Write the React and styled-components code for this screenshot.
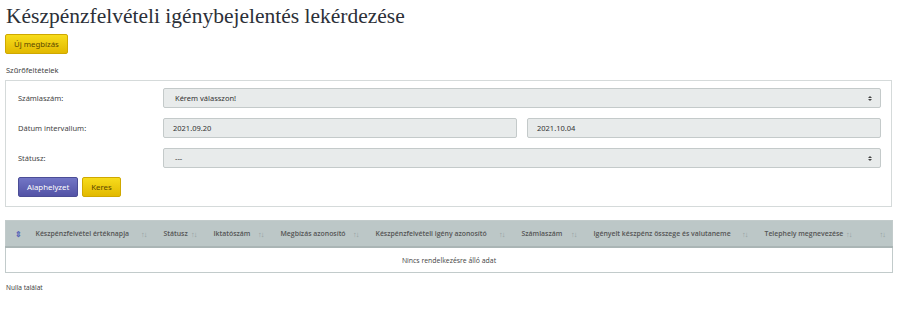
import React from "react";
import styled, { createGlobalStyle } from "styled-components";

const GlobalStyle = createGlobalStyle`
  body {
    margin: 0;
    background: #ffffff;
    font-family: "Noto Sans", "Open Sans", sans-serif;
    color: #333;
  }
`;

const Page = styled.div`
  padding: 2px 8px 0 5px;
`;

const Title = styled.h1`
  margin: 0 0 4px 1px;
  font-family: "Liberation Serif", serif;
  font-weight: normal;
  font-size: 21.5px;
  line-height: 28px;
  color: #2c3038;
`;

const Button = styled.button`
  display: block;
  height: 20px;
  padding: 0 8px;
  border-radius: 2px;
  font-family: "Noto Sans", sans-serif;
  font-size: 7.8px;
  line-height: 18px;
  cursor: pointer;
  border: 1px solid ${(p) => (p.$variant === "primary" ? "#4b4d96" : "#cfa800")};
  color: ${(p) => (p.$variant === "primary" ? "#ffffff" : "#5a4800")};
  background: ${(p) =>
    p.$variant === "primary"
      ? "linear-gradient(#7276c6, #5353a6)"
      : "linear-gradient(#f7dc1c, #e2b900)"};
`;

const SectionLabel = styled.div`
  margin: 11px 0 5px 1px;
  font-size: 7.5px;
  line-height: 10px;
  color: #444;
`;

const Panel = styled.div`
  border: 1px solid #d5dada;
  padding: 7px 10px 9px 12px;
  display: flex;
  flex-direction: column;
  gap: 10px;
`;

const Row = styled.div`
  display: grid;
  grid-template-columns: 145px 1fr;
  align-items: center;
`;

const Label = styled.div`
  font-size: 7.5px;
  line-height: 10px;
  color: #444;
`;

const Fields = styled.div`
  display: flex;
  gap: 10px;
`;

const Field = styled.div`
  flex: 1;
  height: 20px;
  box-sizing: border-box;
  border: 1px solid #c4caca;
  border-radius: 2px;
  background: #e8ebeb;
  display: flex;
  align-items: center;
  justify-content: space-between;
  padding: 0 8px 0 ${(p) => (p.$select ? "11px" : "9px")};
  font-size: 7.5px;
  color: #333;
`;

const Caret = styled.span`
  display: flex;
  flex-direction: column;
  gap: 1px;
  &::before,
  &::after {
    content: "";
    border-left: 2px solid transparent;
    border-right: 2px solid transparent;
  }
  &::before {
    border-bottom: 2px solid #444;
  }
  &::after {
    border-top: 2px solid #444;
  }
`;

const Actions = styled.div`
  display: flex;
  gap: 4px;
  margin-top: -1px;
`;

const Table = styled.table`
  margin-top: 13px;
  width: 100%;
  border-collapse: collapse;
  table-layout: fixed;
  border: 1px solid #c2cbcb;
  font-family: "Open Sans", sans-serif;
`;

const HeadCell = styled.th`
  background: #bcc7c7;
  height: 25px;
  padding: 0 0 0 ${(p) => (p.$pad ? p.$pad : 10)}px;
  font-size: 6.9px;
  font-weight: 600;
  color: #555;
  text-align: left;
  border-bottom: 2px solid #aab5b5;
  white-space: nowrap;
`;

const HeadInner = styled.div`
  display: flex;
  justify-content: space-between;
  align-items: center;
  padding-right: 7px;
`;

const SortArrows = styled.span`
  color: #93a0a0;
  font-size: 7.5px;
  letter-spacing: -1px;
  font-weight: normal;
`;

const FirstSort = styled.span`
  color: #5866b8;
  font-size: 8px;
`;

const EmptyCell = styled.td`
  height: 22px;
  text-align: center;
  font-size: 6.9px;
  color: #444;
  background: #fff;
`;

const Footer = styled.div`
  margin: 10px 0 0 1px;
  font-size: 6.5px;
  color: #444;
`;

const columns = [
  { w: 20, label: "", first: true },
  { w: 128, label: "Készpénzfelvétel értéknapja" },
  { w: 50, label: "Státusz" },
  { w: 67, label: "Iktatószám" },
  { w: 95, label: "Megbízás azonosító" },
  { w: 146, label: "Készpénzfelvételi igény azonosító" },
  { w: 72, label: "Számlaszám" },
  { w: 171, label: "Igényelt készpénz összege és valutaneme" },
  { w: 104, label: "Telephely megnevezése" },
  { w: 34, label: "" },
];

export default function App() {
  return (
    <>
      <GlobalStyle />
      <Page>
        <Title>Készpénzfelvételi igénybejelentés lekérdezése</Title>
        <Button>Új megbízás</Button>
        <SectionLabel>Szűrőfeltételek</SectionLabel>
        <Panel>
          <Row>
            <Label>Számlaszám:</Label>
            <Fields>
              <Field $select>
                Kérem válasszon!
                <Caret />
              </Field>
            </Fields>
          </Row>
          <Row>
            <Label>Dátum intervallum:</Label>
            <Fields>
              <Field>2021.09.20</Field>
              <Field>2021.10.04</Field>
            </Fields>
          </Row>
          <Row>
            <Label>Státusz:</Label>
            <Fields>
              <Field $select>
                ---
                <Caret />
              </Field>
            </Fields>
          </Row>
          <Actions>
            <Button $variant="primary">Alaphelyzet</Button>
            <Button>Keres</Button>
          </Actions>
        </Panel>
        <Table>
          <colgroup>
            {columns.map((c, i) => (
              <col key={i} style={{ width: c.w }} />
            ))}
          </colgroup>
          <thead>
            <tr>
              {columns.map((c, i) =>
                c.first ? (
                  <HeadCell key={i} $pad={9}>
                    <FirstSort>⇕</FirstSort>
                  </HeadCell>
                ) : (
                  <HeadCell key={i}>
                    <HeadInner>
                      <span>{c.label}</span>
                      <SortArrows>↑↓</SortArrows>
                    </HeadInner>
                  </HeadCell>
                )
              )}
            </tr>
          </thead>
          <tbody>
            <tr>
              <EmptyCell colSpan={columns.length}>Nincs rendelkezésre álló adat</EmptyCell>
            </tr>
          </tbody>
        </Table>
        <Footer>Nulla találat</Footer>
      </Page>
    </>
  );
}
